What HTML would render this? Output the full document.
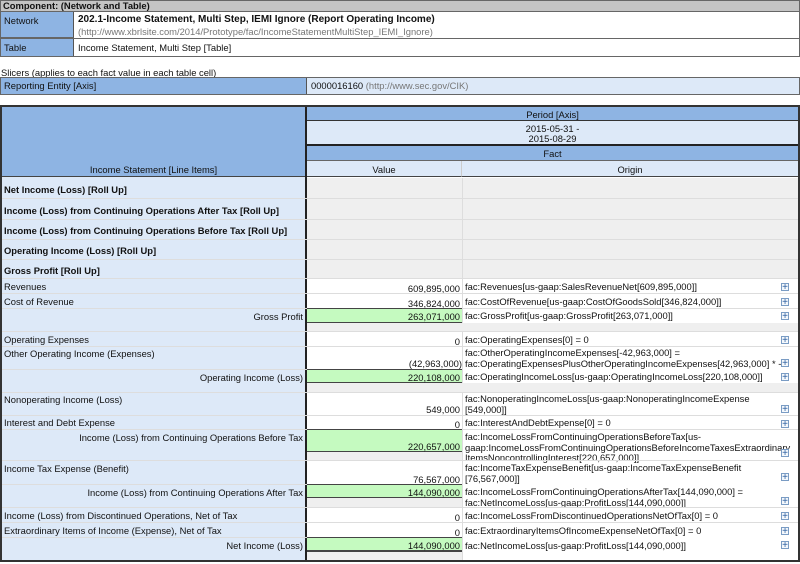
<!DOCTYPE html>
<html><head><meta charset="utf-8"><style>
body{margin:0;width:800px;height:564px;position:relative;background:#fff;font-family:"Liberation Sans",sans-serif;font-size:9.4px;color:#111;overflow:hidden}
div{position:absolute;box-sizing:border-box}
.b{background:#8eb4e3}.l{background:#dde9f8}.g{background:#c5fac0}.gr{background:#efefef}
.r{text-align:right}.c{text-align:center}
.bd{font-weight:bold}
.gy{color:#777}
.pl{font-family:"Liberation Sans",sans-serif;font-size:10px;color:#2a5d9f;line-height:8px;width:8px;height:8px;border:1px solid #7a9cc4;background:#f4f8fc;text-align:center}
</style></head><body>
<!-- component header -->
<div style="left:0;top:0;width:800px;height:57px;border:1px solid #666;background:#fff"></div>
<div style="left:1;top:1px;left:1px;width:798px;height:11px;background:#c4c4c4;border-bottom:1px solid #666;font-weight:bold;padding-left:2px;line-height:10px">Component: (Network and Table)</div>
<div class="b" style="left:1px;top:12px;width:73px;height:26px;border-right:1px solid #555;border-bottom:1px solid #666;padding:3px 3px">Network</div>
<div style="left:78px;top:14px;font-weight:bold;font-size:10px">202.1-Income Statement, Multi Step, IEMI Ignore (Report Operating Income)</div>
<div class="gy" style="left:78px;top:26px">(http://www.xbrlsite.com/2014/Prototype/fac/IncomeStatementMultiStep_IEMI_Ignore)</div>
<div style="left:1px;top:38px;width:798px;height:1px;background:#666"></div>
<div class="b" style="left:1px;top:39px;width:73px;height:17px;border-right:1px solid #555;padding:3px 3px">Table</div>
<div style="left:78px;top:42px">Income Statement, Multi Step [Table]</div>
<!-- slicers -->
<div style="left:1px;top:67px">Slicers (applies to each fact value in each table cell)</div>
<div style="left:0;top:77px;width:800px;height:18px;border:1px solid #666;background:#dde9f8"></div>
<div class="b" style="left:1px;top:78px;width:306px;height:16px;border-right:1px solid #555;padding:2px 3px">Reporting Entity [Axis]</div>
<div style="left:311px;top:80px">0000016160 <span class="gy">(http://www.sec.gov/CIK)</span></div>
<!-- main table -->
<div style="left:0;top:105px;width:800px;height:457px;border:2px solid #333;background:#fff"></div>
<div class="l" style="left:2px;top:107px;width:305px;height:453px;border-right:2px solid #222"></div>
<div class="b" style="left:2px;top:107px;width:303px;height:70px;border-bottom:1px solid #444"></div>
<div class="c" style="left:2px;top:164px;width:303px">Income Statement [Line Items]</div>
<div class="b c" style="left:307px;top:107px;width:491px;height:14px;border-bottom:1px solid #333;padding-top:2px">Period [Axis]</div>
<div class="l c" style="left:307px;top:121px;width:491px;height:25px;border-bottom:2px solid #222;padding-top:3px;line-height:10px">2015-05-31 -<br>2015-08-29</div>
<div class="b c" style="left:307px;top:146px;width:491px;height:15px;border-bottom:1px solid #666;padding-top:2px">Fact</div>
<div class="l c" style="left:307px;top:161px;width:155px;height:16px;border-right:1px solid #ccc;border-bottom:1px solid #444;padding-top:3px">Value</div>
<div class="l c" style="left:462px;top:161px;width:336px;height:16px;border-bottom:1px solid #444;padding-top:3px">Origin</div>

<!-- roll up rows -->
<div class="gr" style="left:307px;top:178px;width:491px;height:101px"></div>
<div style="left:462px;top:178px;width:1px;height:101px;background:#ddd"></div>
<div class="bd" style="left:4px;top:184px">Net Income (Loss) [Roll Up]</div>
<div style="left:2px;top:198px;width:796px;height:1px;background:#ddd"></div>
<div class="bd" style="left:4px;top:205px">Income (Loss) from Continuing Operations After Tax [Roll Up]</div>
<div style="left:2px;top:219px;width:796px;height:1px;background:#ddd"></div>
<div class="bd" style="left:4px;top:225px">Income (Loss) from Continuing Operations Before Tax [Roll Up]</div>
<div style="left:2px;top:239px;width:796px;height:1px;background:#ddd"></div>
<div class="bd" style="left:4px;top:245px">Operating Income (Loss) [Roll Up]</div>
<div style="left:2px;top:259px;width:796px;height:1px;background:#ddd"></div>
<div class="bd" style="left:4px;top:265px">Gross Profit [Roll Up]</div>
<div style="left:2px;top:278px;width:796px;height:1px;background:#ddd"></div>

<!-- data rows -->
<div style="left:462px;top:279px;width:1px;height:281px;background:#ddd"></div>

<div style="left:4px;top:281px">Revenues</div><div class="r" style="left:307px;top:283px;width:153px">609,895,000</div><div style="left:465px;top:281px">fac:Revenues[us-gaap:SalesRevenueNet[609,895,000]]</div>
<div style="left:2px;top:293px;width:796px;height:1px;background:#ddd"></div>
<div style="left:4px;top:296px">Cost of Revenue</div><div class="r" style="left:307px;top:298px;width:153px">346,824,000</div><div style="left:465px;top:296px">fac:CostOfRevenue[us-gaap:CostOfGoodsSold[346,824,000]]</div>
<div style="left:2px;top:308px;width:796px;height:1px;background:#ddd"></div>
<div class="g" style="left:307px;top:308px;width:155px;height:15px;border-top:1px solid #444;border-bottom:1px solid #444"></div>
<div class="r" style="left:2px;top:311px;width:301px">Gross Profit</div><div class="r" style="left:307px;top:311px;width:153px">263,071,000</div><div style="left:465px;top:310px">fac:GrossProfit[us-gaap:GrossProfit[263,071,000]]</div>
<div class="gr" style="left:307px;top:323px;width:491px;height:8px"></div>
<div style="left:2px;top:331px;width:796px;height:1px;background:#ddd"></div>

<div style="left:4px;top:334px">Operating Expenses</div><div class="r" style="left:307px;top:336px;width:153px">0</div><div style="left:465px;top:334px">fac:OperatingExpenses[0] = 0</div>
<div style="left:2px;top:346px;width:796px;height:1px;background:#ddd"></div>
<div style="left:4px;top:348px">Other Operating Income (Expenses)</div><div class="r" style="left:307px;top:358px;width:155px">(42,963,000)</div><div style="left:465px;top:348px;line-height:10.5px">fac:OtherOperatingIncomeExpenses[-42,963,000] =<br>fac:OperatingExpensesPlusOtherOperatingIncomeExpenses[42,963,000] * -1</div>
<div class="g" style="left:307px;top:369px;width:155px;height:14px;border-top:1px solid #444;border-bottom:1px solid #444"></div>
<div style="left:2px;top:369px;width:305px;height:1px;background:#ddd"></div>
<div class="r" style="left:2px;top:372px;width:301px">Operating Income (Loss)</div><div class="r" style="left:307px;top:372px;width:153px">220,108,000</div><div style="left:465px;top:371px">fac:OperatingIncomeLoss[us-gaap:OperatingIncomeLoss[220,108,000]]</div>
<div class="gr" style="left:307px;top:383px;width:491px;height:9px"></div>
<div style="left:2px;top:392px;width:796px;height:1px;background:#ddd"></div>

<div style="left:4px;top:394px">Nonoperating Income (Loss)</div><div class="r" style="left:307px;top:404px;width:153px">549,000</div><div style="left:465px;top:394px;line-height:10.5px">fac:NonoperatingIncomeLoss[us-gaap:NonoperatingIncomeExpense<br>[549,000]]</div>
<div style="left:2px;top:415px;width:796px;height:1px;background:#ddd"></div>
<div style="left:4px;top:417px">Interest and Debt Expense</div><div class="r" style="left:307px;top:419px;width:153px">0</div><div style="left:465px;top:417px">fac:InterestAndDebtExpense[0] = 0</div>
<div style="left:2px;top:429px;width:796px;height:1px;background:#ddd"></div>
<div class="g" style="left:307px;top:429px;width:155px;height:23px;border-top:1px solid #444;border-bottom:1px solid #444"></div>
<div class="gr" style="left:307px;top:452px;width:155px;height:8px"></div>
<div class="r" style="left:2px;top:432px;width:301px">Income (Loss) from Continuing Operations Before Tax</div><div class="r" style="left:307px;top:441px;width:153px">220,657,000</div><div style="left:465px;top:432px;line-height:10.5px">fac:IncomeLossFromContinuingOperationsBeforeTax[us-<br>gaap:IncomeLossFromContinuingOperationsBeforeIncomeTaxesExtraordinary<br>ItemsNoncontrollingInterest[220,657,000]]</div>
<div style="left:2px;top:460px;width:796px;height:1px;background:#ddd"></div>

<div style="left:4px;top:463px">Income Tax Expense (Benefit)</div><div class="r" style="left:307px;top:474px;width:153px">76,567,000</div><div style="left:465px;top:463px;line-height:10.5px">fac:IncomeTaxExpenseBenefit[us-gaap:IncomeTaxExpenseBenefit<br>[76,567,000]]</div>
<div class="g" style="left:307px;top:484px;width:155px;height:14px;border-top:1px solid #444;border-bottom:1px solid #444"></div>
<div class="gr" style="left:307px;top:498px;width:155px;height:9px"></div>
<div style="left:2px;top:484px;width:305px;height:1px;background:#ddd"></div>
<div class="r" style="left:2px;top:487px;width:301px">Income (Loss) from Continuing Operations After Tax</div><div class="r" style="left:307px;top:487px;width:153px">144,090,000</div><div style="left:465px;top:487px;line-height:10.5px">fac:IncomeLossFromContinuingOperationsAfterTax[144,090,000] =<br>fac:NetIncomeLoss[us-gaap:ProfitLoss[144,090,000]]</div>
<div style="left:2px;top:507px;width:796px;height:1px;background:#ddd"></div>
<div style="left:4px;top:510px">Income (Loss) from Discontinued Operations, Net of Tax</div><div class="r" style="left:307px;top:512px;width:153px">0</div><div style="left:465px;top:510px">fac:IncomeLossFromDiscontinuedOperationsNetOfTax[0] = 0</div>
<div style="left:2px;top:522px;width:796px;height:1px;background:#ddd"></div>
<div style="left:4px;top:525px">Extraordinary Items of Income (Expense), Net of Tax</div><div class="r" style="left:307px;top:527px;width:153px">0</div><div style="left:465px;top:525px">fac:ExtraordinaryItemsOfIncomeExpenseNetOfTax[0] = 0</div>
<div class="g" style="left:307px;top:537px;width:155px;height:15px;border-top:1px solid #444;border-bottom:2px solid #444"></div>
<div class="gr" style="left:307px;top:552px;width:155px;height:8px"></div>
<div style="left:2px;top:537px;width:305px;height:1px;background:#ddd"></div>
<div class="r" style="left:2px;top:540px;width:301px">Net Income (Loss)</div><div class="r" style="left:307px;top:540px;width:153px">144,090,000</div><div style="left:465px;top:540px">fac:NetIncomeLoss[us-gaap:ProfitLoss[144,090,000]]</div>

<!-- plus icons -->
<div class="pl" style="left:781px;top:283px">+</div>
<div class="pl" style="left:781px;top:298px">+</div>
<div class="pl" style="left:781px;top:312px">+</div>
<div class="pl" style="left:781px;top:336px">+</div>
<div class="pl" style="left:781px;top:359px">+</div>
<div class="pl" style="left:781px;top:373px">+</div>
<div class="pl" style="left:781px;top:405px">+</div>
<div class="pl" style="left:781px;top:420px">+</div>
<div class="pl" style="left:781px;top:449px">+</div>
<div class="pl" style="left:781px;top:473px">+</div>
<div class="pl" style="left:781px;top:497px">+</div>
<div class="pl" style="left:781px;top:512px">+</div>
<div class="pl" style="left:781px;top:527px">+</div>
<div class="pl" style="left:781px;top:541px">+</div>
</body></html>
